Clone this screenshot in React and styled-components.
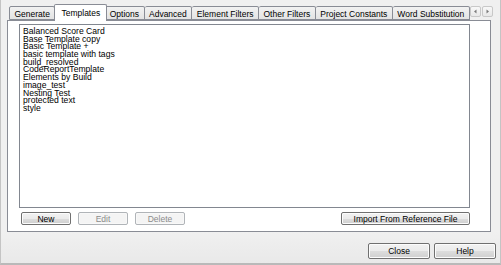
import React, { useState } from "react";
import styled, { createGlobalStyle } from "styled-components";

const GlobalStyle = createGlobalStyle`
  html, body {
    margin: 0;
    padding: 0;
    background: #f0f0f0;
  }
  body {
    font-family: "Liberation Sans", Arial, sans-serif;
  }
`;

const Window = styled.div`
  width: 501px;
  height: 265px;
  box-sizing: border-box;
  background: #f0f0f0;
  border-left: 1px solid #c4c4c4;
  border-right: 1px solid #c4c4c4;
  border-bottom: 2px solid #b9b9b9;
  display: flex;
  flex-direction: column;
  font-size: 8.5px;
  color: #000;
`;

const TabArea = styled.div`
  padding: 4px 9px 0 6px;
  display: flex;
  flex-direction: column;
`;

const TabStrip = styled.div`
  display: flex;
  align-items: flex-end;
  height: 16px;
  padding-left: 2px;
  position: relative;
  z-index: 1;
`;

const Tab = styled.div`
  box-sizing: border-box;
  height: ${(p) => (p.$active ? "17px" : "14px")};
  margin: ${(p) => (p.$active ? "0 -2px -1px -1px" : "0")};
  padding: ${(p) => (p.$active ? "3px 6px 0" : "2px 4.5px 0")};
  border: 1px solid #898c95;
  border-bottom: ${(p) => (p.$active ? "none" : "1px solid #898c95")};
  border-left-width: ${(p) => (p.$active || p.$first ? "1px" : "0")};
  background: ${(p) =>
    p.$active ? "#ffffff" : "linear-gradient(#f2f2f2, #e3e3e3)"};
  border-radius: 2px 2px 0 0;
  white-space: nowrap;
  line-height: 10px;
  position: relative;
  z-index: ${(p) => (p.$active ? 2 : 1)};
`;

const Scroller = styled.div`
  display: flex;
  margin-left: auto;
  align-self: center;
  gap: 1px;
  margin-bottom: 1px;
`;

const ScrollBtn = styled.div`
  width: 11px;
  height: 11px;
  box-sizing: border-box;
  border: 1px solid #c8c8c8;
  background: linear-gradient(#f8f8f8, #e8e8e8);
  border-radius: 2px;
  display: flex;
  align-items: center;
  justify-content: center;
`;

const Panel = styled.div`
  box-sizing: border-box;
  height: 212px;
  background: #ffffff;
  border: 1px solid #898c95;
  padding: 3px 20px 0 11px;
  display: flex;
  flex-direction: column;
`;

const ListBox = styled.div`
  box-sizing: border-box;
  height: 184px;
  border: 1px solid #828790;
  background: #fff;
  padding: 2px 3px;
  color: #000;
`;

const ListItem = styled.div`
  height: 7.7px;
  line-height: 8px;
  font-size: 8.6px;
  white-space: nowrap;
`;

const ButtonRow = styled.div`
  display: flex;
  align-items: center;
  gap: 7px;
  margin-top: 4px;
  padding-left: 2px;
`;

const Button = styled.button`
  box-sizing: border-box;
  width: ${(p) => p.$w || 50}px;
  height: ${(p) => p.$h || 13}px;
  padding: 0;
  font-family: "Liberation Sans", Arial, sans-serif;
  font-size: 8.5px;
  line-height: 10px;
  border-radius: 2px;
  border: 1px solid ${(p) => (p.disabled ? "#b0b4b8" : "#707070")};
  background: ${(p) =>
    p.disabled ? "#f4f4f4" : "linear-gradient(#f2f2f2 0%, #ebebeb 50%, #dddddd 51%, #cfcfcf 100%)"};
  color: ${(p) => (p.disabled ? "#8b8b8b" : "#000")};
  box-shadow: inset 0 0 0 1px ${(p) => (p.disabled ? "#f8f8f8" : "#fcfcfc")};
`;

const Spacer = styled.div`
  flex: 1;
`;

const Footer = styled.div`
  flex: 1;
  display: flex;
  justify-content: flex-end;
  align-items: flex-start;
  gap: 4px;
  padding: 11px 4px 0 0;
  background: linear-gradient(#f0f0f0, #e9e9e9);
`;

const Arrow = ({ dir }) => (
  <svg width="5" height="5" viewBox="0 0 5 5">
    <path
      d={dir === "left" ? "M3.5 0.5 L1 2.5 L3.5 4.5 Z" : "M1.5 0.5 L4 2.5 L1.5 4.5 Z"}
      fill="#7a7a7a"
    />
  </svg>
);

const tabs = [
  "Generate",
  "Templates",
  "Options",
  "Advanced",
  "Element Filters",
  "Other Filters",
  "Project Constants",
  "Word Substitution",
];

const templates = [
  "Balanced Score Card",
  "Base Template copy",
  "Basic Template +",
  "basic template with tags",
  "build_resolved",
  "CodeReportTemplate",
  "Elements by Build",
  "image_test",
  "Nesting Test",
  "protected text",
  "style",
];

export default function App() {
  const [active, setActive] = useState("Templates");

  return (
    <Window>
      <GlobalStyle />
      <TabArea>
        <TabStrip>
          {tabs.map((t, i) => (
            <Tab
              key={t}
              $active={t === active}
              $first={i === 0}
              onClick={() => setActive(t)}
            >
              {t}
            </Tab>
          ))}
          <Scroller>
            <ScrollBtn>
              <Arrow dir="left" />
            </ScrollBtn>
            <ScrollBtn>
              <Arrow dir="right" />
            </ScrollBtn>
          </Scroller>
        </TabStrip>
        <Panel>
          <ListBox>
            {templates.map((t) => (
              <ListItem key={t}>{t}</ListItem>
            ))}
          </ListBox>
          <ButtonRow>
            <Button>New</Button>
            <Button disabled>Edit</Button>
            <Button disabled>Delete</Button>
            <Spacer />
            <Button $w={129}>Import From Reference File</Button>
          </ButtonRow>
        </Panel>
      </TabArea>
      <Footer>
        <Button $w={62} $h={16}>Close</Button>
        <Button $w={62} $h={16}>Help</Button>
      </Footer>
    </Window>
  );
}
